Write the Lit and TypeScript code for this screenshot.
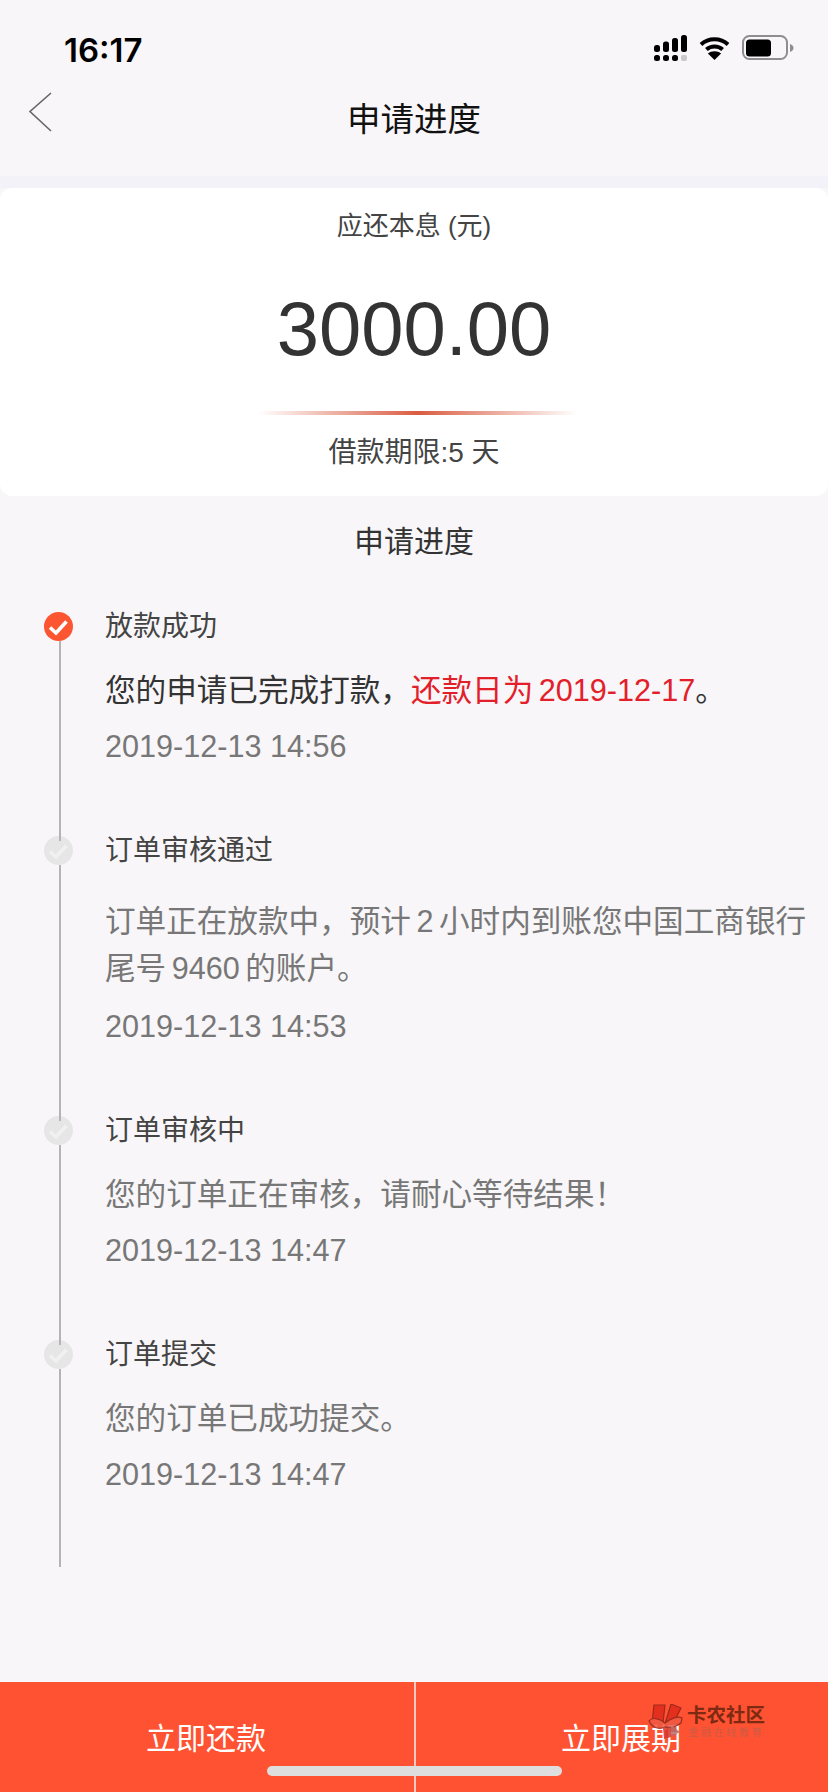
import { LitElement, css, html, svg } from "lit";
import { customElement } from "lit/decorators.js";

interface Step {
  title: string;
  lines: unknown[];
  time: string;
  done?: boolean;
  multi?: boolean;
}

const steps: Step[] = [
  {
    title: "放款成功",
    lines: [html`<span class="dark">您的申请已完成打款，<span class="red">还款日为 2019-12-17</span>。</span>`],
    time: "2019-12-13 14:56",
    done: true,
  },
  {
    title: "订单审核通过",
    lines: ["订单正在放款中，预计 2 小时内到账您中国工商银行", "尾号 9460 的账户。"],
    time: "2019-12-13 14:53",
    multi: true,
  },
  {
    title: "订单审核中",
    lines: ["您的订单正在审核，请耐心等待结果！"],
    time: "2019-12-13 14:47",
  },
  {
    title: "订单提交",
    lines: ["您的订单已成功提交。"],
    time: "2019-12-13 14:47",
  },
];

const signalIcon = svg`
  <svg width="33" height="26" viewBox="0 0 33 26">
    <rect x="0" y="10" width="6" height="7" rx="2.5" fill="#000" />
    <rect x="9" y="6.5" width="6" height="10.5" rx="2.5" fill="#000" />
    <rect x="18" y="3" width="6" height="14" rx="2.5" fill="#000" />
    <rect x="27" y="0" width="6" height="17" rx="2.5" fill="#000" />
    <rect x="0" y="20" width="6" height="6" rx="2.5" fill="#000" />
    <rect x="9" y="20" width="6" height="6" rx="2.5" fill="#000" />
    <rect x="18" y="20" width="6" height="6" rx="2.5" fill="#000" />
    <rect x="27" y="20" width="6" height="6" rx="2" fill="#c8c8c8" />
  </svg>`;

const wifiIcon = svg`
  <svg width="31" height="24" viewBox="0 0 31 24">
    <path d="M2 8.5C9.5 1.6 21.5 1.6 29 8.5" fill="none" stroke="#000" stroke-width="4" />
    <path d="M7.4 13.6C11.8 9.6 19.2 9.6 23.6 13.6" fill="none" stroke="#000" stroke-width="4" />
    <path d="M15.5 24L8.9 17.6C12.4 14.4 18.6 14.4 22.1 17.6Z" fill="#000" />
  </svg>`;

const batteryIcon = svg`
  <svg width="52" height="26" viewBox="0 0 52 26">
    <rect x="1" y="1" width="44" height="23" rx="6.5" fill="none" stroke="#8e8e8e" stroke-width="2" />
    <rect x="4" y="4.5" width="25" height="17" rx="3.5" fill="#000" />
    <path d="M48 9C50 9.8 51.5 11 51.5 13C51.5 15 50 16.2 48 17Z" fill="#8e8e8e" />
  </svg>`;

const checkIcon = svg`
  <svg width="29" height="29" viewBox="0 0 29 29">
    <path d="M6 15.5L12 21L22.5 9.5" fill="none" stroke="currentColor" stroke-width="3.6" />
  </svg>`;

const giftLogo = svg`
  <svg class="wm-logo" width="36" height="36" viewBox="0 0 36 36">
    <path d="M6 1H17L15 19H4Z" fill="#e02a1c" stroke="#8c2418" stroke-width="1.2" />
    <path d="M23 0L33 4L25 20H17Z" fill="#e02a1c" stroke="#8c2418" stroke-width="1.2" />
    <path d="M1 17C4 13 11 14 17 19C23 14 30 12 34 14L33 19C28 23 22 24 17 23C12 26 4 24 1 17Z" fill="#ef5a44" stroke="#8c2418" stroke-width="1.2" />
    <path d="M15 24H23V33L16 35Z" fill="#d8352a" />
    <path d="M23 21L32 28L23 33Z" fill="#b86a6a" />
  </svg>`;

@customElement("app-root")
export class AppRoot extends LitElement {
  static styles = css`
    :host {
      display: block;
      position: relative;
      width: 828px;
      height: 1792px;
      overflow: hidden;
      background: #f8f6f8;
      font-family: "Liberation Sans", "Noto Sans CJK SC", sans-serif;
      color: #333;
    }

    .page {
      display: flex;
      flex-direction: column;
      height: 100%;
    }

    .status {
      height: 68px;
      padding: 36px 34px 0 64px;
      box-sizing: border-box;
      display: flex;
      justify-content: space-between;
      align-items: flex-start;
    }

    .clock {
      font-family: Inter, "Liberation Sans", sans-serif;
      font-size: 33px;
      line-height: 28px;
      font-weight: 600;
      color: #000;
    }

    .status-icons {
      display: flex;
      align-items: center;
      gap: 12px;
      margin-top: -1px;
    }

    .nav {
      height: 108px;
      box-sizing: border-box;
      padding-bottom: 12px;
      position: relative;
      display: flex;
      align-items: center;
      justify-content: center;
      font-size: 33.5px;
      color: #111;
    }

    .back {
      position: absolute;
      left: 28px;
      top: 24px;
    }

    .strip {
      height: 12px;
      background: #f2f2f8;
    }

    .card {
      height: 308px;
      background: #fff;
      border-radius: 12px;
      display: flex;
      flex-direction: column;
      align-items: center;
    }

    .card-label {
      font-size: 26px;
      line-height: 36px;
      margin-top: 20px;
      color: #444;
    }

    .amount {
      font-size: 76px;
      line-height: 86px;
      margin-top: 42px;
      color: #333;
    }

    .divider {
      width: 318px;
      height: 4px;
      margin: 39px 0 0 8px;
      background: linear-gradient(90deg, rgb(218 92 66 / 0%), #da5c42 50%, rgb(218 92 66 / 0%));
    }

    .term {
      font-size: 28px;
      line-height: 40px;
      margin-top: 18px;
      color: #444;
    }

    .section-title {
      text-align: center;
      font-size: 30px;
      line-height: 40px;
      margin-top: 26px;
      color: #333;
    }

    .timeline {
      flex: 1;
      padding: 50px 20px 0 44px;
      display: flex;
      flex-direction: column;
    }

    .step {
      display: grid;
      grid-template-columns: 29px 1fr;
      column-gap: 32px;
    }

    .rail {
      display: flex;
      flex-direction: column;
      align-items: center;
    }

    .dot {
      width: 29px;
      height: 29px;
      border-radius: 50%;
      background: #e6e6e7;
      color: #f0f0f1;
      flex: none;
    }

    .dot.done {
      background: #fc5532;
      color: #fff;
    }

    .line {
      position: relative;
      flex: 1;
      width: 2px;
      margin: 0 0 -5px 2px;
      background: #b4b4b4;
    }

    .step-body {
      padding-bottom: 66px;
    }

    .step:last-child .step-body {
      padding-bottom: 64px;
    }

    .step-title {
      font-size: 28px;
      line-height: 29px;
      color: #444;
    }

    .step-text {
      font-size: 30.6px;
      line-height: 47px;
      margin-top: 26px;
      color: #777;
      white-space: nowrap;
      word-spacing: -3px;
    }

    .multi .step-text {
      margin-top: 33px;
    }

    .dark {
      color: #333;
    }

    .red {
      color: #e3202a;
    }

    .step-time {
      font-size: 30.6px;
      line-height: 47px;
      margin-top: 9px;
      color: #777;
    }

    .multi .step-time {
      margin-top: 11px;
    }

    .actions {
      height: 110px;
      flex: none;
      display: grid;
      grid-template-columns: 414px 2px 1fr;
      background: #ff5233;
      color: #fff;
      font-size: 30px;
    }

    .action {
      display: flex;
      justify-content: center;
      padding: 36px 2px 0 0;
      line-height: 42px;
    }

    .split {
      background: #f3c9bf;
    }

    .home {
      position: absolute;
      left: 267px;
      top: 1766px;
      width: 295px;
      height: 10px;
      border-radius: 5px;
      background: #dedede;
    }

    .watermark {
      position: absolute;
      left: 648px;
      top: 1704px;
      display: flex;
      gap: 3px;
    }

    .wm-logo {
      opacity: 0.85;
    }

    .wm-text {
      display: flex;
      flex-direction: column;
      align-items: flex-start;
    }

    .wm-name {
      font-size: 19.5px;
      line-height: 22px;
      font-weight: 700;
      color: #7e2a12;
    }

    .wm-sub {
      font-size: 10.5px;
      line-height: 13px;
      letter-spacing: 2.2px;
      margin-left: 1px;
      color: #cf5a42;
    }
  `;

  private renderStep(step: Step) {
    return html`
      <div class="step ${step.multi ? "multi" : ""}">
        <div class="rail">
          <div class="dot ${step.done ? "done" : ""}">${checkIcon}</div>
          <div class="line"></div>
        </div>
        <div class="step-body">
          <div class="step-title">${step.title}</div>
          <div class="step-text">${step.lines.map((l) => html`<div>${l}</div>`)}</div>
          <div class="step-time">${step.time}</div>
        </div>
      </div>
    `;
  }

  render() {
    return html`
      <div class="page">
        <div class="status">
          <div class="clock">16:17</div>
          <div class="status-icons">${signalIcon}${wifiIcon}${batteryIcon}</div>
        </div>
        <div class="nav">
          <svg class="back" width="24" height="40" viewBox="0 0 24 40">
            <path d="M23 1L2 19.5L23 39" fill="none" stroke="#666" stroke-width="1.6" />
          </svg>
          <span>申请进度</span>
        </div>
        <div class="strip"></div>
        <div class="card">
          <div class="card-label">应还本息 (元)</div>
          <div class="amount">3000.00</div>
          <div class="divider"></div>
          <div class="term">借款期限:5 天</div>
        </div>
        <div class="section-title">申请进度</div>
        <div class="timeline">${steps.map((s) => this.renderStep(s))}</div>
        <div class="actions">
          <div class="action">立即还款</div>
          <div class="split"></div>
          <div class="action">立即展期</div>
        </div>
      </div>
      <div class="watermark">
        ${giftLogo}
        <div class="wm-text">
          <div class="wm-name">卡农社区</div>
          <div class="wm-sub">金融在线教育</div>
        </div>
      </div>
      <div class="home"></div>
    `;
  }
}
